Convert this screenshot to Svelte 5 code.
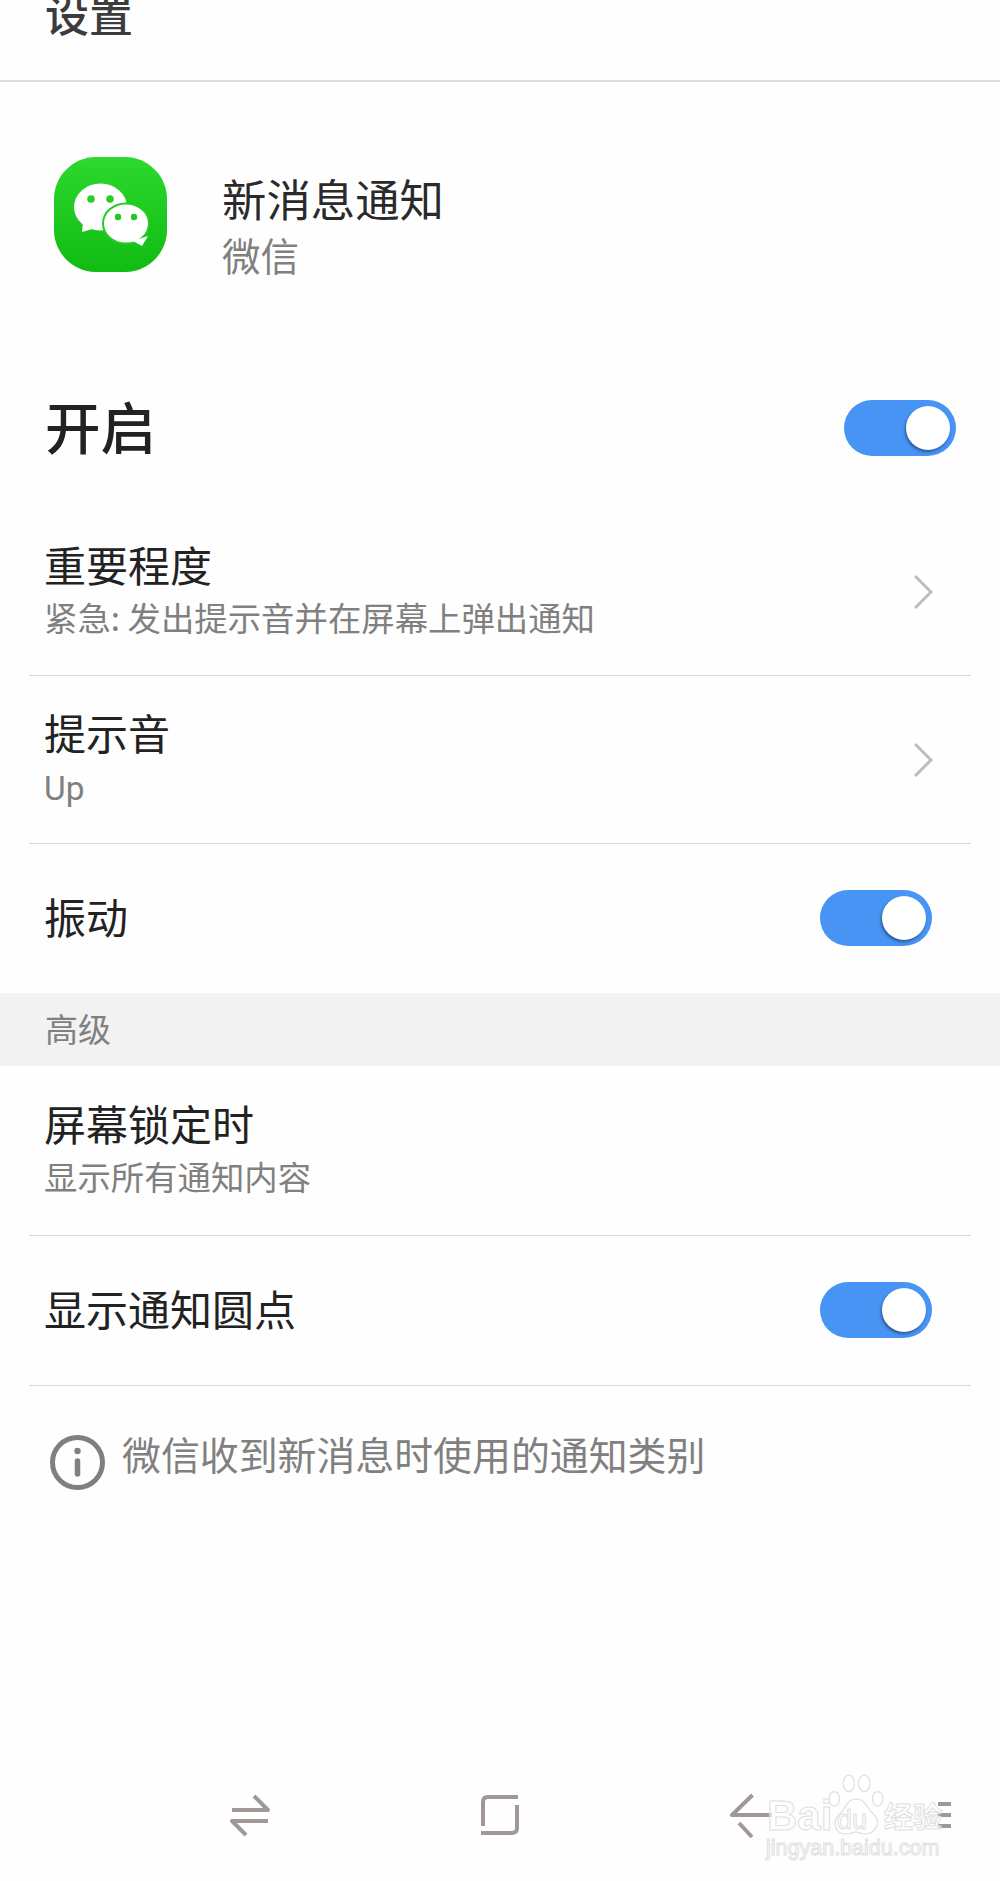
<script>
  const cjk = '"Noto Sans CJK SC", "Noto Sans", sans-serif';
</script>

<div class="page" style:font-family={cjk}>
  <header class="head"><span>设置</span></header>

  <section class="app">
    <svg class="logo" viewBox="0 0 113 115" width="113" height="115">
      <defs>
        <linearGradient id="wg" x1="0" y1="0" x2="0" y2="1">
          <stop offset="0" stop-color="#2dd92f" />
          <stop offset="1" stop-color="#11bb11" />
        </linearGradient>
      </defs>
      <path d="M42 0H71C94 0 113 19 113 42V73C113 96 94 115 71 115H42C19 115 0 96 0 73V42C0 19 19 0 42 0Z" fill="url(#wg)" />
      <ellipse cx="46.5" cy="50" rx="26.5" ry="23.5" fill="#fff" />
      <path d="M28 75L29 64L42 71Z" fill="#fff" />
      <circle cx="37" cy="42" r="3.8" fill="#25d025" />
      <circle cx="56" cy="42" r="3.8" fill="#25d025" />
      <ellipse cx="72" cy="66.5" rx="23" ry="20" fill="#fff" stroke="#22cc22" stroke-width="2" />
      <path d="M88 89L79 84L94 79Z" fill="#fff" />
      <circle cx="64" cy="60" r="3.2" fill="#20c820" />
      <circle cx="80" cy="60" r="3.2" fill="#20c820" />
    </svg>
    <div class="app-text">
      <div class="app-title">新消息通知</div>
      <div class="app-sub">微信</div>
    </div>
  </section>

  <section class="master">
    <span>开启</span>
    <div class="toggle"><i></i></div>
  </section>

  <div class="row tall line">
    <div class="text">
      <div class="title">重要程度</div>
      <div class="sub">紧急: 发出提示音并在屏幕上弹出通知</div>
    </div>
    <svg class="chev" viewBox="0 0 20 36" width="20" height="36"><path d="M2 2L18 18L2 34" /></svg>
  </div>
  <div class="row tall line">
    <div class="text">
      <div class="title">提示音</div>
      <div class="sub latin">Up</div>
    </div>
    <svg class="chev" viewBox="0 0 20 36" width="20" height="36"><path d="M2 2L18 18L2 34" /></svg>
  </div>
  <div class="row plain has-toggle">
    <div class="text"><div class="title">振动</div></div>
    <div class="toggle"><i></i></div>
  </div>

  <div class="band"><span>高级</span></div>

  <div class="row lock line">
    <div class="text">
      <div class="title">屏幕锁定时</div>
      <div class="sub">显示所有通知内容</div>
    </div>
  </div>
  <div class="row dot line has-toggle">
    <div class="text"><div class="title">显示通知圆点</div></div>
    <div class="toggle"><i></i></div>
  </div>

  <div class="info">
    <svg viewBox="0 0 55 55" width="55" height="55">
      <circle cx="27.5" cy="27.5" r="25" fill="none" stroke="#7f7f7f" stroke-width="5" />
      <circle cx="27.5" cy="16" r="3.2" fill="#7f7f7f" />
      <path d="M27.5 26V39" stroke="#7f7f7f" stroke-width="5.5" stroke-linecap="round" />
    </svg>
    <span>微信收到新消息时使用的通知类别</span>
  </div>

  <nav class="nav">
    <svg viewBox="0 1780 1000 101" width="1000" height="101">
      <g class="nav-ico">
        <path d="M232 1810H268L254 1796" />
        <path d="M268 1821H232L246 1835" />
        <path d="M518 1797H488Q483 1797 483 1802V1826" />
        <path d="M481 1833H512Q517 1833 517 1828V1805" />
        <path d="M752.5 1795L732 1815H772" />
        <path d="M739 1823L752 1837" />
        <path d="M938 1804H951M938 1815H951M938 1826H951" />
      </g>
    </svg>
  </nav>

  <div class="mark">
    <span class="mark-bai">Bai</span>
    <svg class="paw" viewBox="0 0 54 60" width="56" height="62">
      <g fill="#fff" fill-opacity="0.6" stroke="#e0e0e0" stroke-width="1.2">
        <ellipse cx="6" cy="24" rx="5" ry="7" />
        <ellipse cx="20" cy="9" rx="5.5" ry="8" />
        <ellipse cx="35" cy="9" rx="5.5" ry="8" />
        <ellipse cx="48" cy="24" rx="5" ry="7" />
        <path d="M27 24C36 24 38 34 44 39C52 46 46 58 36 58C31 58 29 56 27 56C25 56 22 58 17 58C7 58 3 46 11 39C17 34 18 24 27 24Z" />
      </g>
    </svg>
    <span class="mark-du">du</span>
    <span class="mark-cn">经验</span>
    <span class="mark-url">jingyan.baidu.com</span>
  </div>
</div>

<style>
  :global(body) {
    margin: 0;
    background: #fefefe;
  }
  .page {
    position: relative;
    width: 1000px;
    height: 1881px;
    display: flex;
    flex-direction: column;
    overflow: hidden;
    background: #fefefe;
    color: #222;
  }
  .head {
    box-sizing: border-box;
    height: 82px;
    flex: none;
    padding: 0 0 42px 45px;
    display: flex;
    align-items: flex-end;
    border-bottom: 2px solid #dcdcdc;
    font-size: 44px;
    font-weight: 500;
    line-height: 50px;
    color: #3c3c3c;
  }
  .app {
    height: 298px;
    flex: none;
    box-sizing: border-box;
    padding: 75px 0 0 54px;
    display: flex;
    gap: 55px;
  }
  .logo {
    flex: none;
  }
  .app-text {
    margin-top: 13px;
  }
  .app-title {
    font-size: 44.4px;
    line-height: 56px;
    color: #2a2a2a;
  }
  .app-sub {
    font-size: 38.6px;
    line-height: 56px;
    color: #808080;
  }
  .master {
    height: 96px;
    flex: none;
    margin-bottom: 32px;
    padding: 0 44px 0 45px;
    display: flex;
    align-items: center;
    justify-content: space-between;
    font-size: 55.5px;
    font-weight: 500;
    color: #222;
  }
  .master span {
    margin-bottom: 6px;
  }
  .toggle {
    box-sizing: border-box;
    width: 112px;
    height: 56px;
    flex: none;
    padding: 6px;
    display: flex;
    justify-content: flex-end;
    border-radius: 28px;
    background: #4794f4;
  }
  .toggle i {
    display: block;
    width: 44px;
    height: 44px;
    border-radius: 50%;
    background: #fff;
    box-shadow: -1px 2px 3px rgba(0, 0, 0, 0.4);
  }
  .row {
    flex: none;
    box-sizing: border-box;
    margin: 0 29px;
    padding: 0 38px 0 15px;
    display: flex;
    align-items: center;
    justify-content: space-between;
  }
  .row .text {
    margin-bottom: 6px;
  }
  .has-toggle {
    padding-right: 39px;
  }
  .has-toggle .toggle {
    margin-bottom: 2px;
  }
  .line {
    border-bottom: 1px solid #dadada;
  }
  .tall {
    height: 168px;
  }
  .plain {
    height: 149px;
  }
  .lock {
    height: 170px;
  }
  .dot {
    height: 150px;
  }
  .title {
    font-size: 42px;
    line-height: 56px;
    color: #222;
  }
  .sub {
    font-size: 33.4px;
    line-height: 49px;
    color: #808080;
  }
  .latin {
    font-family: Roboto, sans-serif;
    margin-top: 4px;
    margin-bottom: -4px;
  }
  .chev {
    flex: none;
  }
  .chev path {
    fill: none;
    stroke: #bdbdbd;
    stroke-width: 3;
  }
  .band {
    height: 73px;
    flex: none;
    box-sizing: border-box;
    padding-left: 45px;
    display: flex;
    align-items: center;
    background: #f2f2f2;
    font-size: 33px;
    color: #808080;
  }
  .band span {
    margin-bottom: 4px;
  }
  .info {
    flex: none;
    padding: 49px 0 0 50px;
    display: flex;
    align-items: flex-start;
    gap: 17px;
    font-size: 38.9px;
    line-height: 50px;
    color: #808080;
  }
  .info span {
    margin-top: -7px;
  }
  .nav {
    margin-top: auto;
    height: 101px;
    flex: none;
  }
  .nav svg {
    display: block;
  }
  .nav-ico path {
    fill: none;
    stroke: #a09896;
    stroke-width: 4;
    stroke-linejoin: round;
  }
  .mark {
    position: absolute;
    left: 766px;
    top: 1774px;
    width: 190px;
    height: 90px;
    font-family: "Liberation Sans", sans-serif;
    color: rgba(255, 255, 255, 0.6);
    -webkit-text-stroke: 1px #e0e0e0;
    pointer-events: none;
  }
  .mark span {
    position: absolute;
    white-space: nowrap;
  }
  .mark-bai {
    left: 1px;
    top: 19px;
    font-size: 42px;
    line-height: 46px;
    font-weight: 700;
  }
  .paw {
    position: absolute;
    left: 62px;
    top: 0;
  }
  .mark-du {
    left: 71px;
    top: 31px;
    font-size: 27px;
    line-height: 30px;
  }
  .mark-cn {
    left: 118px;
    top: 23px;
    font-size: 29px;
    line-height: 36px;
    font-family: "Noto Sans CJK SC", sans-serif;
    font-weight: 700;
  }
  .mark-url {
    left: 0;
    top: 61px;
    font-size: 21.5px;
    line-height: 26px;
  }
</style>
